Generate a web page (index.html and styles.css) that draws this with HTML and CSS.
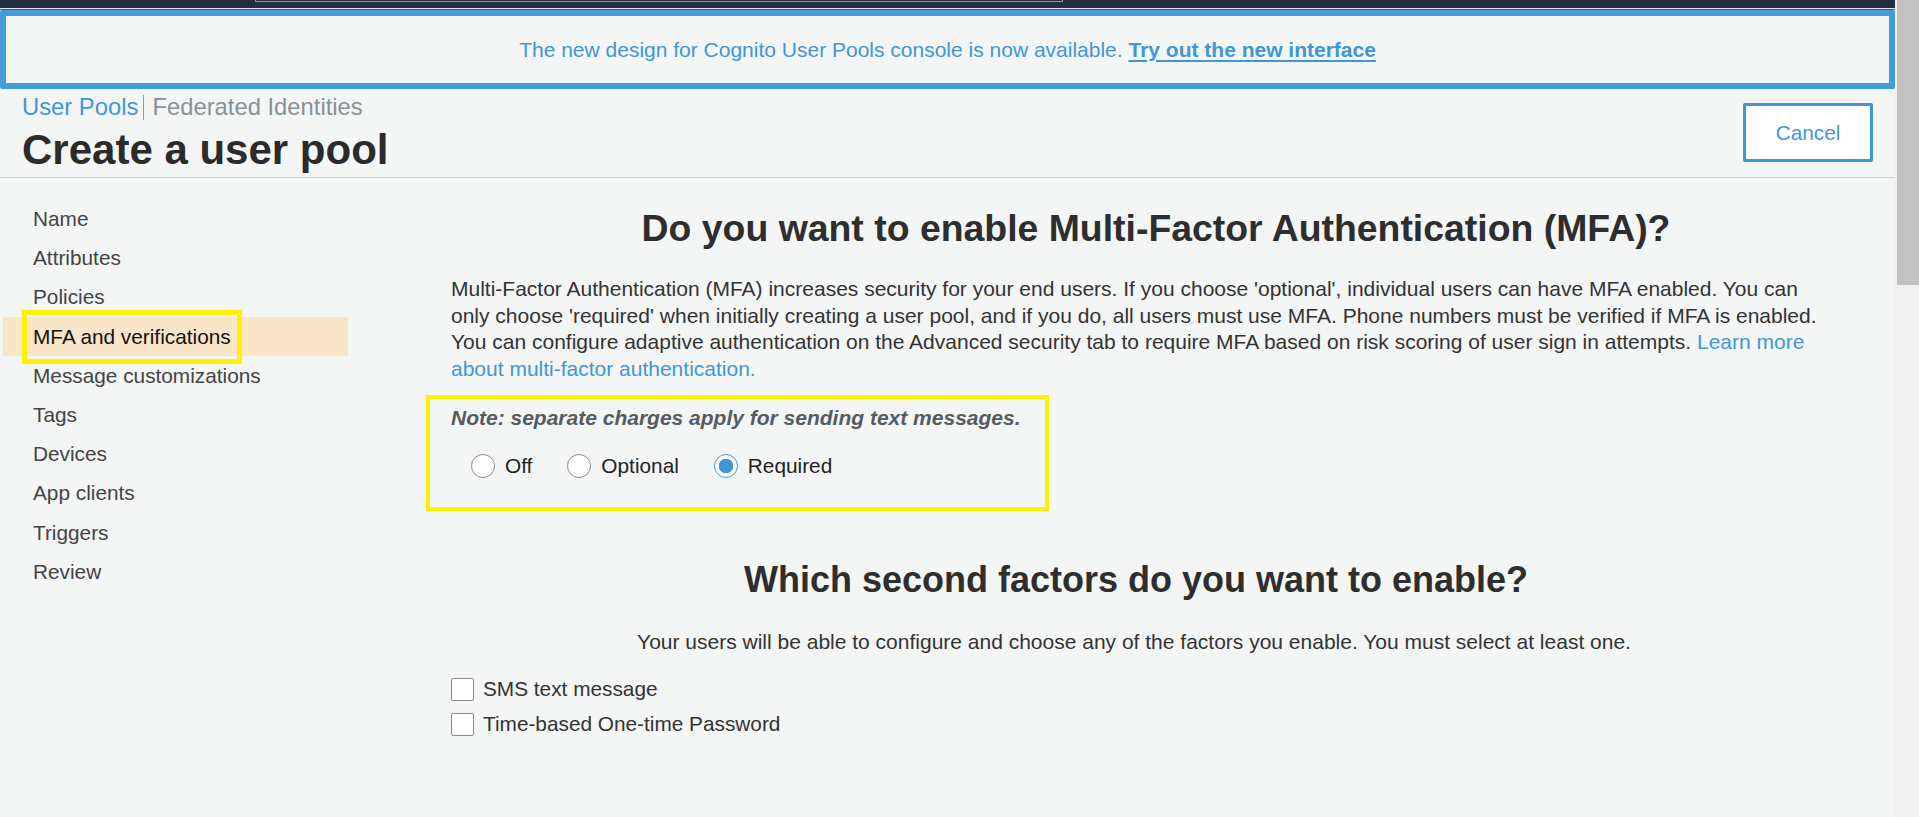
FILE: index.html
```html
<!DOCTYPE html>
<html lang="en">
<head>
<meta charset="utf-8">
<title>Create a user pool</title>
<link rel="stylesheet" href="styles.css">
</head>
<body>
<div class="window">
  <div class="page">
    <div class="topbar"><div class="search"></div></div>
    <div class="topline-light"></div>
    <div class="topline-dark"></div>
    <div class="banner">
      <span>The new design for Cognito User Pools console is now available. </span><a class="banner-link" href="#">Try out the new interface</a>
    </div>
    <header class="header">
      <div class="header-left">
        <nav class="crumbs">
          <a class="crumb-active" href="#">User Pools</a><span class="crumb-sep"></span><a class="crumb" href="#">Federated Identities</a>
        </nav>
        <h1 class="title">Create a user pool</h1>
      </div>
      <button class="cancel" type="button">Cancel</button>
    </header>
    <div class="body">
      <ul class="steps">
        <li class="step">Name</li>
        <li class="step">Attributes</li>
        <li class="step">Policies</li>
        <li class="step step-active"><span class="step-mark">MFA and verifications</span></li>
        <li class="step">Message customizations</li>
        <li class="step">Tags</li>
        <li class="step">Devices</li>
        <li class="step">App clients</li>
        <li class="step">Triggers</li>
        <li class="step">Review</li>
      </ul>
      <main class="content">
        <h2 class="heading heading-mfa">Do you want to enable Multi-Factor Authentication (MFA)?</h2>
        <p class="desc">Multi-Factor Authentication (MFA) increases security for your end users. If you choose 'optional', individual users can have MFA enabled. You can only choose 'required' when initially creating a user pool, and if you do, all users must use MFA. Phone numbers must be verified if MFA is enabled. You can configure adaptive authentication on the Advanced security tab to require MFA based on risk scoring of user sign in attempts. <a class="link" href="#">Learn more about multi-factor authentication.</a></p>
        <div class="mfa-box">
          <p class="note">Note: separate charges apply for sending text messages.</p>
          <div class="radios">
            <label class="radio"><input type="radio" name="mfa"><span>Off</span></label>
            <label class="radio"><input type="radio" name="mfa"><span>Optional</span></label>
            <label class="radio"><input type="radio" name="mfa" checked><span>Required</span></label>
          </div>
        </div>
        <h2 class="heading heading-factors">Which second factors do you want to enable?</h2>
        <p class="hint">Your users will be able to configure and choose any of the factors you enable. You must select at least one.</p>
        <label class="check"><input type="checkbox"><span>SMS text message</span></label>
        <label class="check"><input type="checkbox"><span>Time-based One-time Password</span></label>
      </main>
    </div>
  </div>
  <div class="scrollbar"><div class="thumb"></div></div>
</div>
</body>
</html>
```
FILE: styles.css
```css
* { box-sizing: border-box; }
html, body { margin: 0; padding: 0; }
body {
  font-family: "Liberation Sans", Arial, sans-serif;
  background: #f4f5f5;
  color: #333;
  overflow: hidden;
}
.window { display: flex; height: 817px; }
.page { flex: 1; min-width: 0; overflow: hidden; }
.scrollbar { width: 24px; background: #f0f0f0; padding-left: 2px; }
.thumb { height: 285px; background: #c1c1c1; }

.topbar { height: 8px; background: #232f3e; }
.search {
  margin-left: 255px; width: 808px; height: 2px;
  border-left: 1px solid #8d99a1; border-right: 1px solid #8d99a1; border-bottom: 1px solid #8d99a1;
}
.topline-light { height: 1px; background: #dfe3e6; }
.topline-dark { height: 1px; background: #555b62; }

.banner {
  height: 79px;
  border: 6px solid #439cd8;
  border-radius: 2px;
  display: flex; align-items: center; justify-content: center;
  font-size: 21px;
  color: #3f97d5;
}
.banner span { white-space: pre; }
.banner-link { color: #3f97d5; font-weight: bold; text-decoration: underline; text-underline-offset: 3px; }

.header {
  display: flex; justify-content: space-between; align-items: flex-start;
  padding: 4px 22px 0 22px;
  height: 89px;
  border-bottom: 1px solid #cfd1d2;
}
.crumbs { display: flex; align-items: center; font-size: 23.8px; line-height: 28px; }
.crumb-active { color: #3f97d5; text-decoration: none; padding-right: 5px; }
.crumb-sep { width: 1px; height: 25px; background: #9b9b9b; }
.crumb { color: #879196; text-decoration: none; padding-left: 8px; }
.title { margin: 5px 0 0 0; font-size: 42px; line-height: 48px; font-weight: bold; color: #2b2b2b; }
.cancel {
  margin-top: 10px;
  width: 130px; height: 59px;
  background: #fff;
  border: 3px solid #3f97d5;
  border-radius: 2px;
  color: #3f97d5;
  font-family: inherit;
  font-size: 20.8px;
}

.body { display: flex; }
.steps { list-style: none; margin: 0 0 0 3px; padding: 21px 0 0 0; width: 345px; }
.step {
  height: 39.2px; line-height: 39.2px; padding-left: 30px;
  font-size: 20.8px; color: #444;
}
.step-active { background: #f9e5c8; color: #111; }
.step-mark { display: inline-block; outline: 5px solid #fff200; outline-offset: 6px; line-height: 32px; }

.content { flex: 1; padding: 0 70px 0 103px; }
.heading { margin: 0; font-weight: bold; color: #2e2e2e; text-align: center; }
.heading-mfa { font-size: 37.4px; line-height: 44px; margin-top: 28px; padding-left: 36px; }
.desc { margin: 26px 0 0 0; font-size: 21px; line-height: 26.7px; color: #333; }
.link { color: #3f97d5; text-decoration: none; }

.mfa-box {
  margin: 12px 0 0 -25px;
  width: 623px; height: 116px;
  border: 4px solid #fff200;
  padding: 6px 21px 0 21px;
}
.note { margin: 0; font-size: 21px; line-height: 26px; font-weight: bold; font-style: italic; color: #555b62; }
.radios { display: flex; margin-top: 23px; padding-left: 20px; }
.radio { display: flex; align-items: center; margin-right: 35px; font-size: 20.8px; line-height: 24px; color: #222; }
.radio input {
  appearance: none; -webkit-appearance: none;
  width: 24px; height: 24px; margin: 0 10px 0 0;
  border: 1px solid #8a8a8a; border-radius: 50%; background: #fff;
}
.radio input:checked {
  border-color: #3f97d5;
  background: radial-gradient(circle, #3f97d5 0 7px, #fff 7.5px);
}

.heading-factors { font-size: 36px; line-height: 44px; margin-top: 47px; padding-right: 4px; }
.hint { margin: 28px 0 0 0; padding-right: 8px; font-size: 21px; line-height: 24px; text-align: center; white-space: nowrap; color: #333; }
.check { display: flex; align-items: center; height: 35px; font-size: 20.8px; color: #333; }
.hint + .check { margin-top: 18px; }
.check input {
  appearance: none; -webkit-appearance: none;
  width: 23px; height: 23px; margin: 0 9px 0 0;
  border: 1px solid #8a8a8a; border-radius: 2px; background: #fff;
}
```
